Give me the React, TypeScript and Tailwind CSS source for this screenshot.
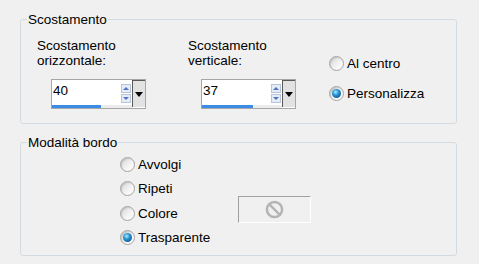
import type { ReactNode } from 'react';

const font = "font-['Liberation_Sans',Arial,sans-serif]";

function Radio({ label, checked }: { label: string; checked?: boolean }) {
  return (
    <div className="flex items-center h-[15px] leading-[15px]">
      <span className="flex items-center justify-center w-[15px] h-[15px] rounded-full border border-[#a4a4a4] bg-[linear-gradient(135deg,#d6d6d6,#f4f4f4_60%,#ffffff)] shadow-[inset_1px_1px_1px_rgba(0,0,0,0.12)]">
        {checked && (
          <span className="w-[9px] h-[9px] rounded-full bg-[radial-gradient(circle_at_40%_35%,#b6ecff_0%,#2c9ad8_35%,#0a4b86_85%)]" />
        )}
      </span>
      <span className="ml-[3px]">{label}</span>
    </div>
  );
}

function SpinBox({ value, fill }: { value: string; fill: number }) {
  return (
    <div className="flex w-[95px] h-[30px] border border-[#a6a6a6] bg-white">
      <div className="flex-1 flex flex-col">
        <div className="flex-1 flex items-start justify-between pl-[1px] pt-[3px]">
          <span className="leading-[15px]">{value}</span>
          <div className="flex flex-col gap-[1px] mt-[1px] mr-[1px]">
            <div className="flex items-center justify-center w-[10px] h-[9px] border border-[#b8c4d8] bg-[#e6ecf6]">
              <span className="w-0 h-0 border-x-[3px] border-x-transparent border-b-[3px] border-b-[#4f74c4]" />
            </div>
            <div className="flex items-center justify-center w-[10px] h-[9px] border border-[#b8c4d8] bg-[#e6ecf6]">
              <span className="w-0 h-0 border-x-[3px] border-x-transparent border-t-[3px] border-t-[#4f74c4]" />
            </div>
          </div>
        </div>
        <div className="h-[3px] bg-[#ececec]">
          <div className="h-full bg-[#3b8ce4]" style={{ width: `${fill}px` }} />
        </div>
      </div>
      <div className="flex items-center justify-center w-[13px] h-[27px] border-l border-t border-[#5a5a5a] bg-[#e2e2e2]">
        <span className="w-0 h-0 border-x-[4px] border-x-transparent border-t-[5px] border-t-black" />
      </div>
    </div>
  );
}

function Group({ title, children, className }: { title: string; children: ReactNode; className?: string }) {
  return (
    <fieldset className={`border border-[#d3dbe1] rounded-[3px] px-[6px] ${className ?? ''}`}>
      <legend className="px-[1px] leading-[15px]">{title}</legend>
      {children}
    </fieldset>
  );
}

export default function App() {
  return (
    <div className={`${font} text-[13.5px] text-black w-[479px] h-[264px] bg-[#f0f0f0] pt-[12px] pl-[20px] pr-[22px]`}>
      <Group title="Scostamento" className="pb-[14px]">
        <div className="flex items-start pl-[10px] pt-[11px]">
          <div className="w-[151px]">
            <div className="leading-[15px]">
              Scostamento
              <br />
              orizzontale:
            </div>
            <div className="mt-[11px] ml-[14px]">
              <SpinBox value="40" fill={49} />
            </div>
          </div>
          <div className="w-[141px]">
            <div className="leading-[15px]">
              Scostamento
              <br />
              verticale:
            </div>
            <div className="mt-[11px] ml-[13px]">
              <SpinBox value="37" fill={51} />
            </div>
          </div>
          <div className="flex flex-col gap-[15px] mt-[18px]">
            <Radio label="Al centro" />
            <Radio label="Personalizza" checked />
          </div>
        </div>
      </Group>

      <Group title="Modalità bordo" className="mt-[11px] pb-[10px]">
        <div className="flex items-start pl-[93px] pt-[7px]">
          <div className="w-[118px] flex flex-col gap-[9.33px]">
            <Radio label="Avvolgi" />
            <Radio label="Ripeti" />
            <Radio label="Colore" />
            <Radio label="Trasparente" checked />
          </div>
          <div className="mt-[39px] flex items-center justify-center w-[73px] h-[27px] border-l border-t border-[#a0a0a0] border-r border-b border-r-white border-b-white bg-[#f0f0f0]">
            <svg width="19" height="19" viewBox="0 0 20 20">
              <circle cx="10" cy="10" r="8" fill="none" stroke="#b4b4b4" strokeWidth="2.6" />
              <line x1="4.6" y1="4.6" x2="15.4" y2="15.4" stroke="#b4b4b4" strokeWidth="2.6" />
            </svg>
          </div>
        </div>
      </Group>
    </div>
  );
}
